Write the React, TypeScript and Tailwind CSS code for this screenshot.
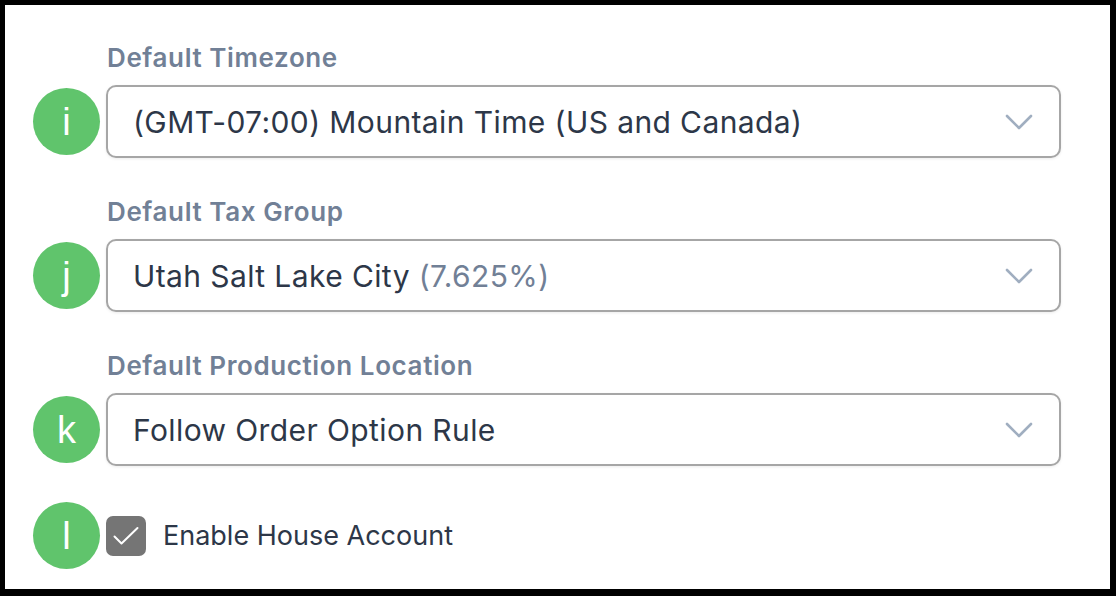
import React from "react";

interface Field {
  badge:  string;
  label:  string;
  value:  string;
  extra?: string;
}

const fields: Field[] = [
  { badge: "i", label: "Default Timezone",            value: "(GMT-07:00) Mountain Time (US and Canada)" },
  { badge: "j", label: "Default Tax Group",           value: "Utah Salt Lake City", extra: "(7.625%)" },
  { badge: "k", label: "Default Production Location", value: "Follow Order Option Rule" },
];

export default function App() {
  return (
    <div className="h-[596px] w-[1116px] bg-black pt-[5px] pl-[5px] pr-[6px] pb-[7px]">
      <div className="h-full w-full bg-white pt-[37px] pl-[28px] font-['Inter',sans-serif]">
        <div className="flex flex-col gap-[38px]">
          {fields.map((f) => (
            <div key={f.badge} className="grid grid-cols-[67px_955px] gap-x-[6px]">
              <div />
              <p className="mb-[11px] pl-[1px] text-[26px] leading-[32px] font-semibold tracking-[0.6px] text-[#718096]">
                {f.label}
              </p>
              <div className="flex items-center">
                <Badge letter={f.badge} />
              </div>
              <Select value={f.value} extra={f.extra} />
            </div>
          ))}
        </div>

        <div className="mt-[36px] flex items-center gap-x-[6px]">
          <Badge letter="l" />
          <div className="flex items-center gap-[17px]">
            <span className="flex h-[40px] w-[40px] items-center justify-center rounded-[7px] bg-[#757575]">
              <svg width="28" height="22" viewBox="0 0 28 22" fill="none">
                <path d="M2.5 11.5l7 7L25.5 3" stroke="white" strokeWidth="2" strokeLinecap="round" strokeLinejoin="round" />
              </svg>
            </span>
            <span className="text-[27px] leading-none text-[#2d3748]">Enable House Account</span>
          </div>
        </div>
      </div>
    </div>
  );
}

/* ── helpers ─────────────────────────────────────────────── */

function Badge({ letter }: { letter: string }) {
  return (
    <span className="flex h-[67px] w-[67px] items-center justify-center rounded-full bg-[#60c46c] font-['Liberation_Sans',sans-serif] text-[38px] leading-none text-white">
      {letter}
    </span>
  );
}

function Select({ value, extra }: { value: string; extra?: string }) {
  return (
    <div className="flex h-[73px] items-center justify-between rounded-[10px] border-2 border-[#a6a6a6] bg-white pl-[25px] pr-[26px] shadow-[0_1px_3px_rgba(0,0,0,0.08)]">
      <span className="text-[30px] leading-none tracking-[0.4px] text-[#2d3748]">
        {value}
        {extra && <span className="text-[#718096]"> {extra}</span>}
      </span>
      <svg width="28" height="16" viewBox="0 0 28 16" fill="none">
        <path d="M2 2l12 12L26 2" stroke="#a0aec0" strokeWidth="2.6" strokeLinecap="round" strokeLinejoin="round" />
      </svg>
    </div>
  );
}
